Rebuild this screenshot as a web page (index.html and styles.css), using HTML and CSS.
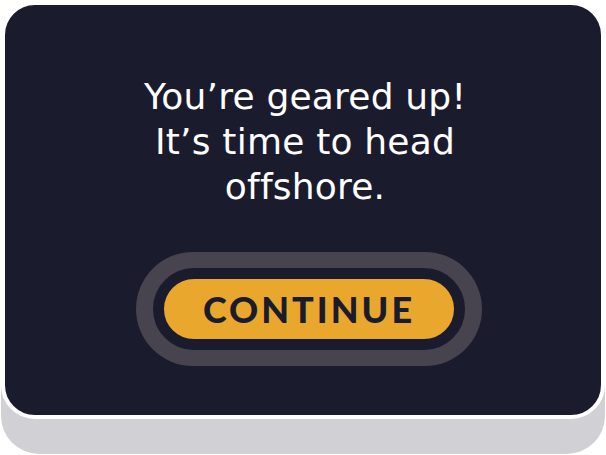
FILE: index.html
```html
<!DOCTYPE html>
<html>
<head>
<meta charset="utf-8">
<link rel="stylesheet" href="styles.css">
</head>
<body>
<div class="frame">
  <div class="card">
    <p class="message">You’re geared up!<br>It’s time to head<br>offshore.</p>
    <div class="ring">
      <button class="continue">CONTINUE</button>
    </div>
  </div>
</div>
</body>
</html>
```
FILE: styles.css
```css
html, body {
  margin: 0;
  padding: 0;
  background: #ffffff;
}
body {
  width: 606px;
  height: 455px;
  overflow: hidden;
}
.frame {
  margin: 1px 0 0 1px;
  width: 604px;
  height: 453px;
  box-sizing: border-box;
  background: #d1d0d5;
  border-radius: 38px;
}
.card {
  box-sizing: border-box;
  width: 604px;
  height: 418px;
  background: #1b1b2e;
  border: 4px solid #ffffff;
  border-radius: 34px;
  display: flex;
  flex-direction: column;
  align-items: center;
}
.message {
  margin: 69px 0 0 4px;
  color: #ffffff;
  font-family: "DejaVu Sans", sans-serif;
  font-size: 36px;
  line-height: 45px;
  letter-spacing: 0.2px;
  text-align: center;
}
.ring {
  margin: 43px 0 0 12px;
  background: #47434f;
  border-radius: 60px;
  padding: 16px 17px;
  display: flex;
}
.continue {
  width: 312px;
  height: 82px;
  box-sizing: border-box;
  border: 11px solid #1b1b2e;
  border-radius: 41px;
  background: #e9a72e;
  color: #1b1b2e;
  font-family: "Lato", sans-serif;
  font-weight: 900;
  font-size: 36px;
  letter-spacing: 3px;
  padding: 0;
}
```
